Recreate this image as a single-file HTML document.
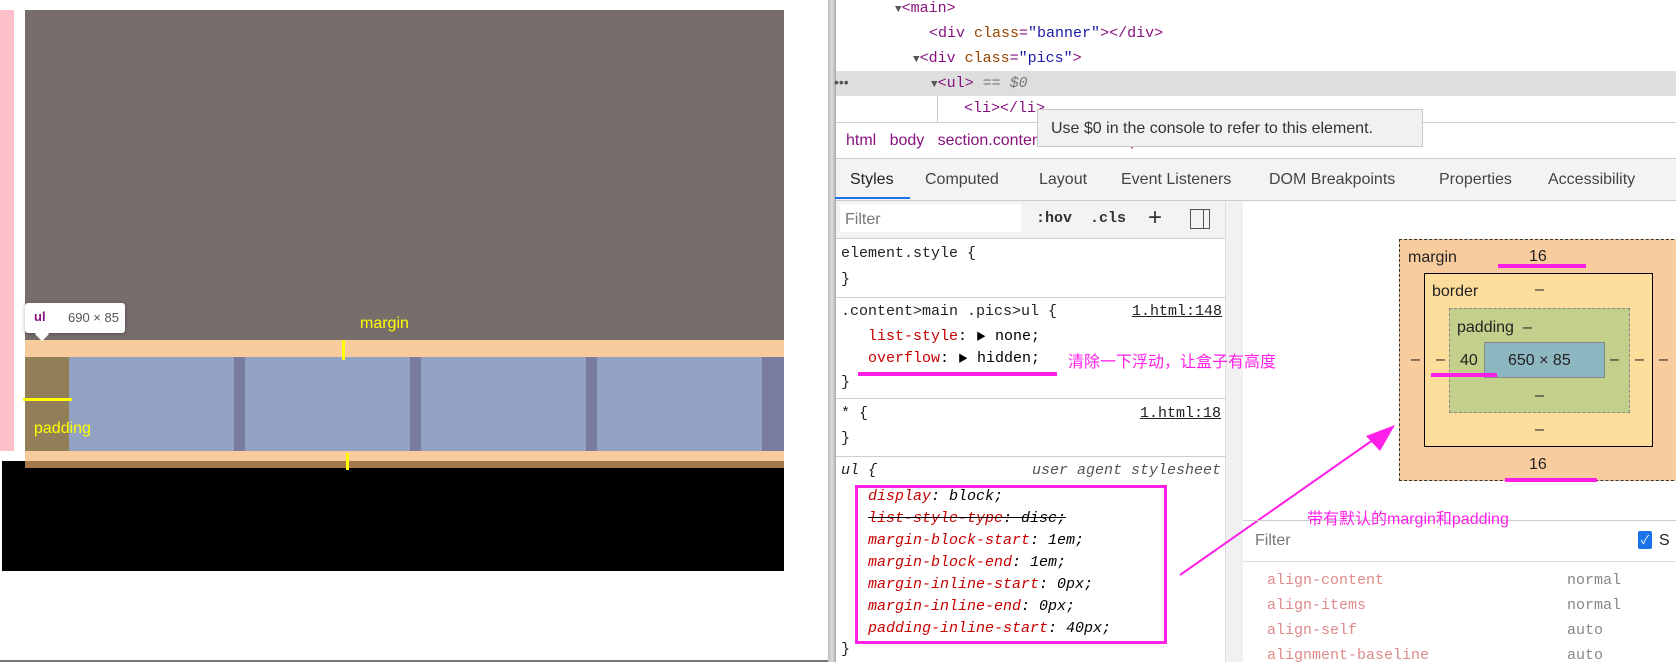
<!DOCTYPE html>
<html><head><meta charset="utf-8"><style>
*{margin:0;padding:0;box-sizing:border-box}
body{width:1676px;height:662px;position:relative;overflow:hidden;background:#fff;font-family:"Liberation Sans","Noto Sans CJK SC",sans-serif}
.a{position:absolute}
.m{font-family:"Liberation Mono","Noto Sans CJK SC",monospace;font-size:15px;white-space:nowrap;line-height:20px}
.s{font-size:16px;white-space:nowrap;line-height:20px}
.tag{color:#881280}.at{color:#994500}.av{color:#1a1aa6}
.pn{color:#c80000}
.y{color:#ffff00}
.mg{color:#ff1fe8}
</style></head><body>
<div class="a" style="left:0;top:10px;width:14px;height:441px;background:#ffc0cb"></div>
<div class="a" style="left:25px;top:10px;width:759px;height:330px;background:#776d6b"></div>
<div class="a" style="left:25px;top:340px;width:759px;height:17px;background:#f7cb9b"></div>
<div class="a" style="left:25px;top:357px;width:759px;height:94px;background:#91a2c3"></div>
<div class="a" style="left:25px;top:357px;width:44px;height:94px;background:#927f5a"></div>
<div class="a" style="left:234px;top:357px;width:11px;height:94px;background:#7b7da0"></div>
<div class="a" style="left:410px;top:357px;width:11px;height:94px;background:#7b7da0"></div>
<div class="a" style="left:586px;top:357px;width:11px;height:94px;background:#7b7da0"></div>
<div class="a" style="left:762px;top:357px;width:22px;height:94px;background:#7b7da0"></div>
<div class="a" style="left:25px;top:451px;width:759px;height:10px;background:#f7cb9b"></div>
<div class="a" style="left:2px;top:461px;width:782px;height:110px;background:#000"></div>
<div class="a" style="left:25px;top:461px;width:759px;height:7px;background:#a5784a"></div>
<div class="a" style="left:342px;top:340px;width:3px;height:20px;background:#ff0"></div>
<div class="a" style="left:346px;top:453px;width:3px;height:17px;background:#ff0"></div>
<div class="a" style="left:23px;top:398px;width:49px;height:3px;background:#ff0"></div>
<div class="a s y" style="left:360px;top:314px">margin</div>
<div class="a s y" style="left:34px;top:419px">padding</div>
<div class="a" style="left:25px;top:303px;width:100px;height:30px;background:#fff;border-radius:3px;box-shadow:0 1px 4px rgba(0,0,0,.3)"></div>
<div class="a" style="left:37px;top:329px;width:10px;height:10px;background:#fff;transform:rotate(45deg)"></div>
<div class="a" style="left:34px;top:309px;font-size:13px;font-weight:bold;color:#881280">ul</div>
<div class="a" style="left:68px;top:310px;font-size:13px;color:#555">690 × 85</div>
<div class="a" style="left:0;top:660px;width:830px;height:2px;background:#777"></div>
<div class="a" style="left:828px;top:0;width:8px;height:662px;background:linear-gradient(90deg,#bbb,#ddd,#aaa)"></div>
<div class="a" style="left:836px;top:71px;width:840px;height:25px;background:#dedede"></div>
<div class="a m" style="left:895px;top:-1px"><span style="color:#555;font-size:11px">▼</span><span class="tag">&lt;main&gt;</span></div>
<div class="a m" style="left:929px;top:24px"><span class="tag">&lt;div </span><span class="at">class</span><span class="tag">=</span><span class="av">"banner"</span><span class="tag">&gt;&lt;/div&gt;</span></div>
<div class="a m" style="left:913px;top:49px"><span style="color:#555;font-size:11px">▼</span><span class="tag">&lt;div </span><span class="at">class</span><span class="tag">=</span><span class="av">"pics"</span><span class="tag">&gt;</span></div>
<div class="a m" style="left:931px;top:74px"><span style="color:#555;font-size:11px">▼</span><span class="tag">&lt;ul&gt;</span> <span style="color:#777">== <i>$0</i></span></div>
<div class="a" style="left:834px;top:74px;font-size:14px;color:#555">•••</div>
<div class="a" style="left:937px;top:96px;width:1px;height:26px;background:#ccc"></div>
<div class="a m" style="left:964px;top:99px"><span class="tag">&lt;li&gt;&lt;/li&gt;</span></div>
<div class="a" style="left:836px;top:122px;width:840px;height:1px;background:#ccc"></div>
<div class="a s" style="left:846px;top:131px;color:#881280">html&nbsp;&nbsp;&nbsp;body&nbsp;&nbsp;&nbsp;section.content&nbsp;&nbsp;&nbsp;main&nbsp;&nbsp;&nbsp;div.pics&nbsp;&nbsp;&nbsp;ul</div>
<div class="a s" style="left:1037px;top:109px;width:386px;height:38px;background:#f1f1f1;border:1px solid #c8c8c8;padding:9px 13px;color:#333">Use $0 in the console to refer to this element.</div>
<div class="a" style="left:836px;top:158px;width:840px;height:1px;background:#ccc"></div>
<div class="a" style="left:836px;top:159px;width:840px;height:41px;background:#f3f3f3"></div>
<div class="a s" style="left:850px;top:170px;color:#222">Styles</div>
<div class="a s" style="left:925px;top:170px;color:#444">Computed</div>
<div class="a s" style="left:1039px;top:170px;color:#444">Layout</div>
<div class="a s" style="left:1121px;top:170px;color:#444">Event Listeners</div>
<div class="a s" style="left:1269px;top:170px;color:#444">DOM Breakpoints</div>
<div class="a s" style="left:1439px;top:170px;color:#444">Properties</div>
<div class="a s" style="left:1548px;top:170px;color:#444">Accessibility</div>
<div class="a" style="left:835px;top:197px;width:75px;height:2px;background:#1a73e8"></div>
<div class="a" style="left:836px;top:200px;width:840px;height:1px;background:#ccc"></div>
<div class="a" style="left:836px;top:201px;width:389px;height:37px;background:#f3f3f3"></div>
<div class="a" style="left:840px;top:204px;width:181px;height:28px;background:#fff"></div>
<div class="a s" style="left:845px;top:210px;color:#777">Filter</div>
<div class="a m" style="left:1036px;top:209px;font-weight:bold;color:#333">:hov&nbsp;&nbsp;.cls</div>
<div class="a" style="left:1148px;top:204px;font-size:24px;color:#333">+</div>
<div class="a" style="left:1190px;top:209px;width:20px;height:20px;border:1px solid #555"></div>
<div class="a" style="left:1203px;top:209px;width:1px;height:20px;background:#555"></div>
<div class="a" style="left:1225px;top:201px;width:18px;height:461px;background:#f1f1f1;border-left:1px solid #ddd"></div>
<div class="a" style="left:836px;top:238px;width:389px;height:1px;background:#ccc"></div>
<div class="a m" style="left:841px;top:244px;color:#222">element.style {</div>
<div class="a m" style="left:841px;top:270px;color:#222">}</div>
<div class="a" style="left:836px;top:297px;width:389px;height:1px;background:#ccc"></div>
<div class="a m" style="left:841px;top:302px;color:#222">.content&gt;main .pics&gt;ul {</div>
<div class="a m" style="left:1132px;top:302px;color:#222;text-decoration:underline">1.html:148</div>
<div class="a m" style="left:868px;top:327px"><span class="pn">list-style</span>: <span style="font-size:10px">▶</span> none;</div>
<div class="a m" style="left:868px;top:349px"><span class="pn">overflow</span>: <span style="font-size:10px">▶</span> hidden;</div>
<div class="a" style="left:858px;top:372px;width:199px;height:4px;background:#ff1fe8"></div>
<div class="a s mg" style="left:1068px;top:353px">清除一下浮动，让盒子有高度</div>
<div class="a m" style="left:841px;top:373px;color:#222">}</div>
<div class="a" style="left:836px;top:398px;width:389px;height:1px;background:#ccc"></div>
<div class="a m" style="left:841px;top:404px;color:#222">* {</div>
<div class="a m" style="left:1140px;top:404px;color:#222;text-decoration:underline">1.html:18</div>
<div class="a m" style="left:841px;top:429px;color:#222">}</div>
<div class="a" style="left:836px;top:456px;width:389px;height:1px;background:#ccc"></div>
<div class="a m" style="left:841px;top:461px;color:#222;font-style:italic">ul {</div>
<div class="a m" style="left:1032px;top:461px;color:#555;font-style:italic">user agent stylesheet</div>
<div class="a" style="left:855px;top:485px;width:312px;height:159px;border:3px solid #ff1fe8"></div>
<div class="a m" style="left:868px;top:486px;font-style:italic;line-height:22px">
<span class="pn">display</span>: block;<br>
<s><span class="pn">list-style-type</span>: disc;</s><br>
<span class="pn">margin-block-start</span>: 1em;<br>
<span class="pn">margin-block-end</span>: 1em;<br>
<span class="pn">margin-inline-start</span>: 0px;<br>
<span class="pn">margin-inline-end</span>: 0px;<br>
<span class="pn">padding-inline-start</span>: 40px;</div>
<div class="a m" style="left:841px;top:640px;color:#222">}</div>
<div class="a" style="left:1399px;top:239px;width:290px;height:242px;background:#f9cc9d;border:1px dashed #333"></div>
<div class="a s" style="left:1408px;top:248px;color:#222">margin</div>
<div class="a s" style="left:1529px;top:247px;color:#222">16</div>
<div class="a" style="left:1498px;top:264px;width:88px;height:4px;background:#ff1fe8"></div>
<div class="a" style="left:1424px;top:273px;width:229px;height:174px;background:#fddd9b;border:1px solid #000"></div>
<div class="a s" style="left:1432px;top:282px;color:#222">border</div>
<div class="a s" style="left:1535px;top:280px;color:#222">–</div>
<div class="a" style="left:1449px;top:308px;width:181px;height:105px;background:#c3d08b;border:1px dashed #888"></div>
<div class="a s" style="left:1457px;top:318px;color:#222">padding&nbsp;&nbsp;–</div>
<div class="a" style="left:1484px;top:342px;width:121px;height:36px;background:#8cb6c0;border:1px solid #888"></div>
<div class="a s" style="left:1508px;top:351px;color:#222">650 × 85</div>
<div class="a s" style="left:1460px;top:351px;color:#222">40</div>
<div class="a" style="left:1431px;top:373px;width:66px;height:4px;background:#ff1fe8"></div>
<div class="a s" style="left:1411px;top:350px;color:#222">–</div>
<div class="a s" style="left:1436px;top:350px;color:#222">–</div>
<div class="a s" style="left:1610px;top:350px;color:#222">–</div>
<div class="a s" style="left:1635px;top:350px;color:#222">–</div>
<div class="a s" style="left:1659px;top:350px;color:#222">–</div>
<div class="a s" style="left:1535px;top:386px;color:#222">–</div>
<div class="a s" style="left:1535px;top:420px;color:#222">–</div>
<div class="a s" style="left:1529px;top:455px;color:#222">16</div>
<div class="a" style="left:1505px;top:478px;width:92px;height:4px;background:#ff1fe8"></div>
<svg class="a" style="left:1170px;top:415px" width="240" height="170"><line x1="10" y1="160" x2="210" y2="20" stroke="#ff1fe8" stroke-width="2"/><polygon points="225,10 196,21 210,36" fill="#ff1fe8"/></svg>
<div class="a" style="left:1243px;top:520px;width:433px;height:1px;background:#ccc"></div>
<div class="a s mg" style="left:1307px;top:510px">带有默认的margin和padding</div>
<div class="a s" style="left:1255px;top:531px;color:#777">Filter</div>
<div class="a" style="left:1638px;top:531px;width:14px;height:18px;background:#1a73e8;border-radius:2px;color:#fff;font-size:12px;text-align:center;line-height:18px">✓</div>
<div class="a s" style="left:1659px;top:531px;color:#222">S</div>
<div class="a" style="left:1243px;top:561px;width:433px;height:1px;background:#ddd"></div>
<div class="a m" style="left:1267px;top:568px;color:#e08a8a;line-height:25px">align-content<br>align-items<br>align-self<br>alignment-baseline</div>
<div class="a m" style="left:1567px;top:568px;color:#888;line-height:25px">normal<br>normal<br>auto<br>auto</div>
</body></html>
